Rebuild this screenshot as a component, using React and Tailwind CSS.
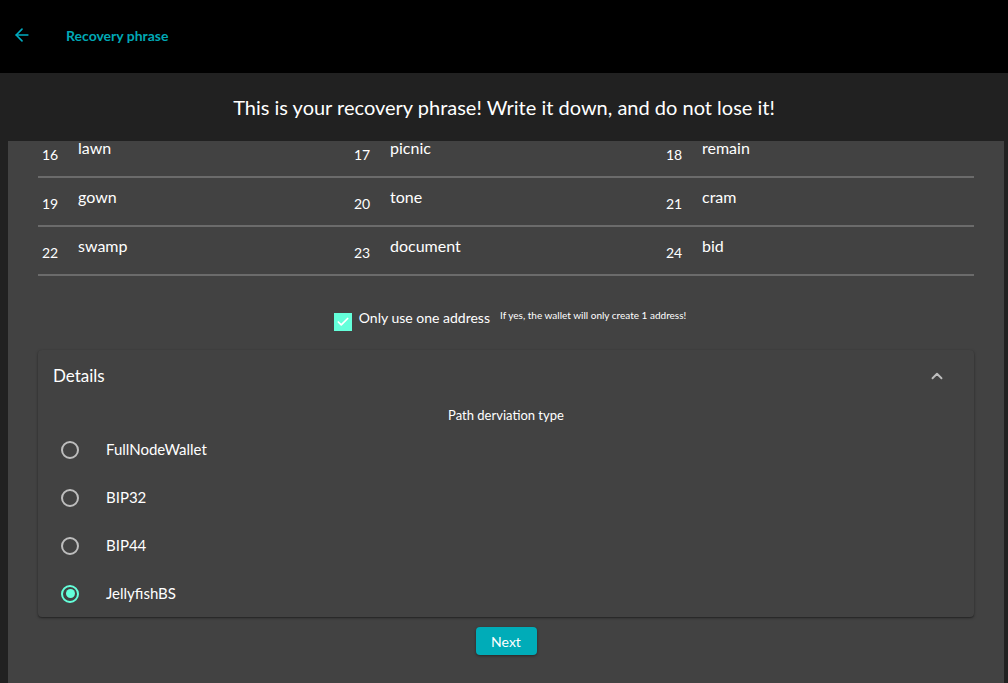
import React, { useState } from 'react';
import { ArrowLeft, ChevronUp, Check } from 'lucide-react';

const words = [
    [16, 'lawn'], [17, 'picnic'], [18, 'remain'],
    [19, 'gown'], [20, 'tone'], [21, 'cram'],
    [22, 'swamp'], [23, 'document'], [24, 'bid'],
];

const paths = ['FullNodeWallet', 'BIP32', 'BIP44', 'JellyfishBS'];

const App = () => {
    const [single, setSingle] = useState(true);
    const [path, setPath] = useState('JellyfishBS');

    const rows = [words.slice(0, 3), words.slice(3, 6), words.slice(6, 9)];

    return (
        <div className="w-[1008px] h-[683px] overflow-hidden bg-[#212121] text-white" style={{ fontFamily: 'Lato, "Open Sans", sans-serif' }}>
            {/* App bar */}
            <div className="h-[73px] bg-black flex items-center pb-[3px]">
                <button className="w-[44px] flex justify-center text-[#00acc1]">
                    <ArrowLeft size={20} strokeWidth={2} />
                </button>
                <span className="ml-[22px] text-[14px] font-bold text-[#00a8b5]">Recovery phrase</span>
            </div>

            <div className="h-[68px] flex items-center justify-center">
                <h1 className="text-[20px] text-white">This is your recovery phrase! Write it down, and do not lose it!</h1>
            </div>

            <div className="mx-[8px] w-[996px] h-[542px] bg-[#424242] overflow-hidden">
                {/* Word list (scrolled) */}
                <div className="mx-[30px] -mt-[12px]">
                    {rows.map((row, i) => (
                        <div key={i} className="grid grid-cols-3 h-[49px] border-b-2 border-[#6b6b6b]">
                            {row.map(([n, w]) => (
                                <div key={n} className="flex items-start pl-[4px] pt-[7px]">
                                    <span className="w-[36px] text-[14px] mt-[8px]">{n}</span>
                                    <span className="text-[16px]">{w}</span>
                                </div>
                            ))}
                        </div>
                    ))}
                </div>

                {/* One address */}
                <div className="flex justify-center items-start mt-[33px] pl-[8px]">
                    <button
                        onClick={() => setSingle(!single)}
                        className={`w-[18px] h-[18px] mt-[4px] flex items-center justify-center ${single ? 'bg-[#64ffda]' : 'border-2 border-[#bdbdbd]'}`}
                    >
                        {single && <Check size={14} strokeWidth={3} className="text-white" />}
                    </button>
                    <span className="ml-[7px] text-[14px] leading-[18px]">Only use one address</span>
                    <span className="ml-[10px] text-[10px] leading-[12px]">If yes, the wallet will only create 1 address!</span>
                </div>

                {/* Details accordion */}
                <div className="mx-[30px] mt-[19px] h-[267px] bg-[#424242] rounded-[4px] shadow-[0_1px_3px_rgba(0,0,0,0.35),0_1px_1px_rgba(0,0,0,0.2)]">
                    <div className="h-[52px] flex items-center justify-between pl-[15px] pr-[28px]">
                        <span className="text-[17px]">Details</span>
                        <ChevronUp size={18} strokeWidth={2.5} className="text-[#bdbdbd]" />
                    </div>
                    <p className="text-center text-[13px] mt-[4px]">Path derviation type</p>
                    <div>
                        {paths.map((p) => (
                            <label key={p} onClick={() => setPath(p)} className="h-[48px] flex items-center pl-[23px] cursor-pointer">
                                <span className={`w-[18px] h-[18px] rounded-full border-2 flex items-center justify-center ${path === p ? 'border-[#64ffda]' : 'border-[#bdbdbd]'}`}>
                                    {path === p && <span className="w-[9px] h-[9px] rounded-full bg-[#64ffda]" />}
                                </span>
                                <span className="ml-[27px] text-[15px]">{p}</span>
                            </label>
                        ))}
                    </div>
                </div>

                <div className="flex justify-center mt-[10px]">
                    <button className="w-[61px] h-[28px] rounded-[4px] bg-[#00acb8] text-[14px] text-white shadow-[0_1px_3px_rgba(0,0,0,0.4)]">Next</button>
                </div>
            </div>
        </div>
    );
};

export default App;
